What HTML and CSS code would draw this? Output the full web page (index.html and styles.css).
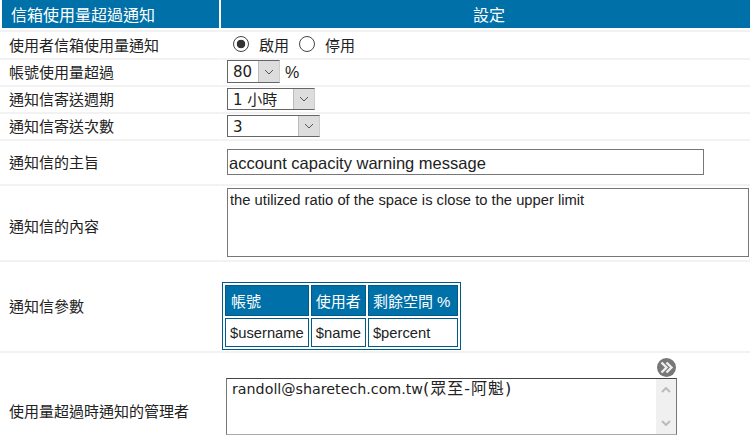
FILE: index.html
```html
<!DOCTYPE html>
<html lang="zh-Hant">
<head>
  <meta charset="UTF-8">
  <title>信箱使用量超過通知</title>
  <link rel="stylesheet" href="styles.css">
</head>
<body>
  <table class="form">
    <colgroup><col class="col-label"><col></colgroup>
    <tr class="head">
      <th class="head-left">信箱使用量超過通知</th>
      <th class="head-right">設定</th>
    </tr>
    <tr class="r-radio">
      <td>使用者信箱使用量通知</td>
      <td>
        <div class="radios">
          <span class="radio on"></span><span class="radio-text">啟用</span>
          <span class="radio"></span><span class="radio-text">停用</span>
        </div>
      </td>
    </tr>
    <tr class="r-sel">
      <td>帳號使用量超過</td>
      <td>
        <div class="inline">
          <div class="sel sel-a"><span class="sel-text">80</span><span class="sel-btn"><svg width="10" height="6" viewBox="0 0 10 6"><path d="M1 1l4 4 4-4" fill="none" stroke="#555" stroke-width="1"/></svg></span></div>
          <span class="unit">%</span>
        </div>
      </td>
    </tr>
    <tr class="r-sel">
      <td>通知信寄送週期</td>
      <td>
        <div class="sel sel-b"><span class="sel-text">1 小時</span><span class="sel-btn"><svg width="10" height="6" viewBox="0 0 10 6"><path d="M1 1l4 4 4-4" fill="none" stroke="#555" stroke-width="1"/></svg></span></div>
      </td>
    </tr>
    <tr class="r-sel">
      <td>通知信寄送次數</td>
      <td>
        <div class="sel sel-c"><span class="sel-text">3</span><span class="sel-btn"><svg width="10" height="6" viewBox="0 0 10 6"><path d="M1 1l4 4 4-4" fill="none" stroke="#555" stroke-width="1"/></svg></span></div>
      </td>
    </tr>
    <tr class="r-subject">
      <td>通知信的主旨</td>
      <td><input class="subject" value="account capacity warning message"></td>
    </tr>
    <tr class="r-body">
      <td class="body-label">通知信的內容</td>
      <td><textarea class="body-text">the utilized ratio of the space is close to the upper limit</textarea></td>
    </tr>
    <tr class="r-params">
      <td>通知信參數</td>
      <td class="params-cell">
        <table class="params">
          <tr>
            <th class="p1">帳號</th>
            <th class="p2">使用者</th>
            <th class="p3">剩餘空間 %</th>
          </tr>
          <tr>
            <td>$username</td>
            <td>$name</td>
            <td>$percent</td>
          </tr>
        </table>
      </td>
    </tr>
    <tr class="r-admin">
      <td class="admin-label">使用量超過時通知的管理者</td>
      <td class="admin-cell">
        <div class="admin-tools">
          <span class="more"><svg width="19" height="19" viewBox="0 0 19 19"><circle cx="9.5" cy="9.5" r="9.5" fill="#777"/><path d="M4.5 4.5l5 5-5 5M9.5 4.5l5 5-5 5" fill="none" stroke="#eee" stroke-width="2.4"/></svg></span>
        </div>
        <div class="listbox">
          <div class="list-text">randoll@sharetech.com.tw<span class="list-name">(眾至-阿魁)</span></div>
          <div class="list-bar">
            <svg width="10" height="6" viewBox="0 0 10 6"><path d="M1 5l4-4 4 4" fill="none" stroke="#bbb" stroke-width="2"/></svg>
            <svg width="10" height="6" viewBox="0 0 10 6"><path d="M1 1l4 4 4-4" fill="none" stroke="#bbb" stroke-width="2"/></svg>
          </div>
        </div>
      </td>
    </tr>
  </table>
</body>
</html>
```

FILE: styles.css
```css
html, body {
  margin: 0;
  padding: 0;
  height: 443px;
  overflow: hidden;
  background: white;
}
body {
  font-family: "Liberation Sans", "Noto Sans CJK TC", sans-serif;
  font-size: 15px;
  color: #222;
}
.form {
  width: 750px;
  border-collapse: separate;
  border-spacing: 0;
  table-layout: fixed;
}
.col-label {
  width: 221px;
}
.form > tbody > tr > td {
  box-sizing: border-box;
  border-top: 2px solid #f2f2f2;
  padding: 0 0 2px 9px;
  vertical-align: middle;
}
.form > tbody > tr > td:first-child {
  border-right: 1px solid white;
}
.form > tbody > tr > td + td {
  padding: 0 0 0 6px;
}
.head th {
  background: #0070a8;
  color: white;
  font-weight: normal;
  font-size: 16px;
  height: 28px;
  padding: 0;
  border-bottom: 2px solid white;
}
.head .head-left {
  text-align: left;
  padding-left: 9px;
  border-left: 2px solid white;
  border-right: 2px solid white;
}
.head .head-right {
  padding-left: 7px;
}
.r-radio td { height: 28px; }
.r-sel td { height: 27px; }
.r-subject td { height: 45px; }
.r-body td { height: 76px; }
.r-params td { height: 91px; }
.radios {
  display: flex;
  align-items: center;
  padding: 0 0 2px 6px;
}
.radio {
  width: 16px;
  height: 16px;
  border: 1px solid #444;
  border-radius: 50%;
  box-sizing: border-box;
  background: white;
}
.radio.on {
  background: radial-gradient(circle, #333 0 4px, white 4.6px);
}
.radio-text {
  margin: 0 10px 0 10px;
}
.inline {
  display: flex;
  align-items: center;
}
.unit {
  margin-left: 5px;
  font-size: 16px;
}
.sel {
  display: flex;
  align-items: stretch;
  height: 23px;
  margin-bottom: 2px;
  box-sizing: border-box;
  border: 1px solid #666;
  border-right-color: #ccc;
  background: white;
  font-family: "DejaVu Sans", "Noto Sans CJK TC", sans-serif;
  font-size: 15px;
}
.sel-a { width: 53px; }
.sel-b { width: 88px; height: 22px; }
.sel-c { width: 93px; height: 22px; }
.sel-text {
  flex: 1;
  padding-left: 5px;
  line-height: 22px;
}
.sel-btn {
  width: 20px;
  background: #ddd;
  border-left: 1px solid #bbb;
  display: flex;
  align-items: center;
  justify-content: center;
}
.subject {
  display: block;
  box-sizing: border-box;
  width: 477px;
  height: 26px;
  margin: 0 0 2px;
  padding: 3px 1px 0;
  border: 1px solid #777;
  font: 16.5px "Liberation Sans", "Noto Sans CJK TC", sans-serif;
  color: #222;
  outline: 0;
}
.form > tbody > tr > .body-label {
  padding: 4px 0 0 9px;
}
.body-text {
  display: block;
  box-sizing: border-box;
  width: 522px;
  height: 69px;
  margin: 1px 0 2px;
  padding: 3px 2px 0;
  border: 1px solid #777;
  font: 14.75px "Liberation Sans", "Noto Sans CJK TC", sans-serif;
  color: #222;
  resize: none;
  outline: 0;
}
.form > tbody > tr > .params-cell {
  height: auto;
  padding: 19px 0 0 1px;
}
.params {
  border: 1px solid #005b8a;
  border-spacing: 2px;
  border-collapse: separate;
  white-space: nowrap;
}
.params th {
  box-sizing: border-box;
  background: #0070a8;
  color: white;
  font-weight: normal;
  text-align: left;
  height: 31px;
  padding: 0 0 0 4px;
  border: 1px solid #005b8a;
  font-size: 15px;
}
.params td {
  box-sizing: border-box;
  height: 29px;
  padding: 0 4px;
  border: 1px solid #005b8a;
  font-size: 14.75px;
}
.params .p1 { width: 83px; padding-left: 5px; }
.params .p2 { width: 55px; }
.params .p3 { width: 90px; }
.form > tbody > tr > .admin-label {
  padding: 31px 0 0 9px;
}
.form > tbody > tr > .admin-cell {
  padding: 5px 0 2px 5px;
  vertical-align: top;
}
.admin-tools {
  display: flex;
  justify-content: flex-end;
  padding-right: 74px;
  height: 20px;
}
.listbox {
  display: flex;
  width: 451px;
  height: 57px;
  box-sizing: border-box;
  border: 1px solid #777;
  border-top-color: #444;
  border-bottom-color: #aaa;
}
.list-text {
  flex: 1;
  padding: 0 5px;
  font-family: "DejaVu Sans", "Noto Sans CJK TC", sans-serif;
  font-size: 14.25px;
  line-height: 20px;
}
.list-name {
  font-size: 16px;
  letter-spacing: 1px;
}
.list-bar {
  width: 20px;
  background: #f0f0f0;
  display: flex;
  flex-direction: column;
  justify-content: space-between;
  align-items: center;
  padding: 8px 0;
  box-sizing: border-box;
}
```
